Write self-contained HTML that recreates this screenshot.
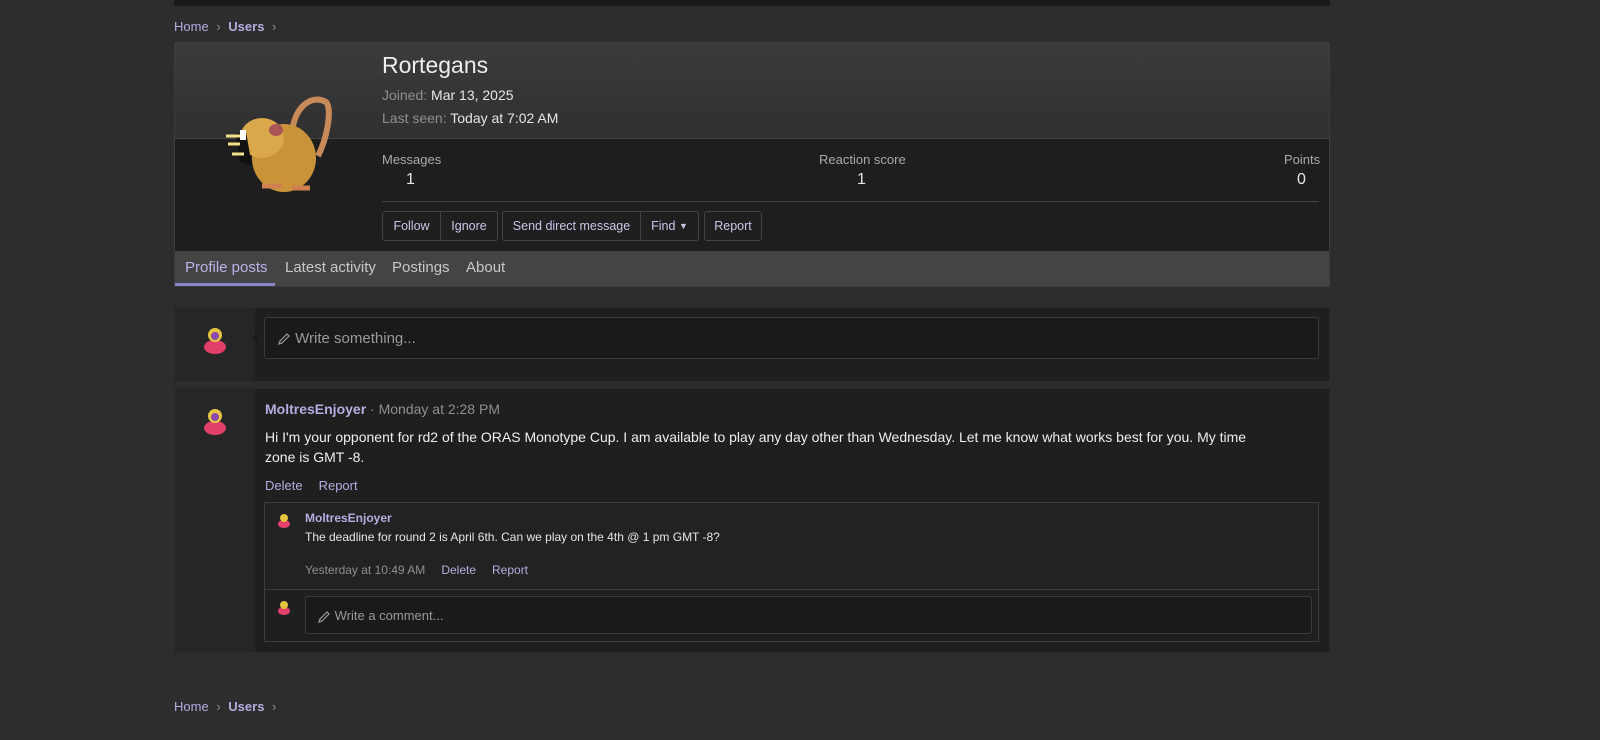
<!DOCTYPE html>
<html><head><meta charset="utf-8"><style>
*{box-sizing:border-box;margin:0;padding:0}
body{width:1600px;height:740px;background:#2d2d2d;font-family:"Liberation Sans",sans-serif;color:#e6e6e6;position:relative;overflow:hidden}
.abs{position:absolute}
.link{color:#b3aee0}
.muted{color:#8f8f8f}
.btn{position:absolute;top:211px;height:30px;border:1px solid #444;background:#1f1f1f;border-radius:3px;font-size:12.5px;color:#c9c7e8;display:flex;align-items:center;white-space:nowrap}
.btn span{padding:0 9px;height:100%;display:flex;align-items:center;white-space:nowrap}
.btn span+span{border-left:1px solid #444}
.pencil{display:inline-block;width:14px;height:14px;vertical-align:middle}
</style></head><body>
<div class="abs" style="left:174px;top:0;width:1156px;height:6px;background:#1b1b1b"></div>
<div class="abs" style="left:174px;top:19px;font-size:13px"><span class="link">Home</span> <span class="muted" style="margin:0 4px">›</span> <b class="link">Users</b> <span class="muted" style="margin-left:4px">›</span></div>

<div class="abs" style="left:174px;top:42px;width:1156px;height:245px;border:1px solid #3c3c3c;background:#1e1e1e">
 <div style="height:96px;background:linear-gradient(#3b3b3b,#303030);border-bottom:1px solid #444"></div>
 <div style="height:112px"></div>
 <div style="height:35px;background:#444;position:relative;font-size:15px;color:#c8c8c8">
  <div class="abs" style="left:10px;top:8px;color:#b9b5e8">Profile posts</div>
  <div class="abs" style="left:0;bottom:0;width:100px;height:3px;background:#8a86c9"></div>
  <div class="abs" style="left:110px;top:8px">Latest activity</div>
  <div class="abs" style="left:217px;top:8px">Postings</div>
  <div class="abs" style="left:291px;top:8px">About</div>
 </div>
</div>
<svg class="abs" style="left:222px;top:96px" width="112" height="104" viewBox="0 0 112 104">
 <path d="M70 38 C72 10 90 -2 104 6 C110 12 106 40 96 60" stroke="#c98a5a" stroke-width="6" fill="none"/>
 <ellipse cx="62" cy="62" rx="32" ry="34" fill="#c9933a"/>
 <ellipse cx="40" cy="42" rx="22" ry="20" fill="#d9a84a"/>
 <path d="M14 38 L24 36 L30 70 L18 66 Z" fill="#111"/>
 <rect x="18" y="34" width="6" height="10" fill="#fff"/>
 <path d="M4 40 h14 M6 48 h12 M10 58 h12" stroke="#f3e08a" stroke-width="3"/>
 <ellipse cx="54" cy="34" rx="7" ry="6" fill="#a55"/>
 <path d="M40 90 h20 M70 92 h18" stroke="#d08050" stroke-width="5"/>
</svg>
<div class="abs" style="left:382px;top:52px;font-size:23px;color:#eee">Rortegans</div>
<div class="abs" style="left:382px;top:87px;font-size:14px"><span class="muted">Joined:</span> Mar 13, 2025</div>
<div class="abs" style="left:382px;top:110px;font-size:14px"><span class="muted">Last seen:</span> Today at 7:02 AM</div>
<div class="abs muted" style="left:382px;top:152px;font-size:13px;color:#aaa">Messages</div>
<div class="abs" style="left:406px;top:171px;font-size:16px">1</div>
<div class="abs" style="left:819px;top:152px;font-size:13px;color:#aaa">Reaction score</div>
<div class="abs" style="left:857px;top:171px;font-size:16px">1</div>
<div class="abs" style="left:1284px;top:152px;font-size:13px;color:#aaa">Points</div>
<div class="abs" style="left:1297px;top:171px;font-size:16px">0</div>
<div class="abs" style="left:382px;top:201px;width:937px;height:1px;background:#444"></div>
<div class="btn" style="left:382px;width:116px"><span style="width:57px;justify-content:center;padding:0">Follow</span><span style="flex:1;justify-content:center;padding:0">Ignore</span></div>
<div class="btn" style="left:502px;width:197px"><span style="width:137px;justify-content:center;padding:0">Send direct message</span><span style="flex:1;justify-content:center;padding:0">Find&nbsp;<small style="font-size:9px">▼</small></span></div>
<div class="btn" style="left:704px;width:58px"><span style="width:100%;justify-content:center;padding:0">Report</span></div>

<div class="abs" style="left:174px;top:307px;width:1156px;height:75px;background:#1f1f1f;border:1px solid #2a2a2a">
 <div style="position:absolute;left:0;top:0;width:80px;height:100%;background:#262626"></div>
</div>
<svg class="abs" style="left:200px;top:325px" width="30" height="30"><ellipse cx="15" cy="22" rx="11" ry="7" fill="#e0406a"/><circle cx="15" cy="10" r="7" fill="#e5c540"/><circle cx="15" cy="11" r="4" fill="#8a4ab0"/></svg>
<div class="abs" style="left:246px;top:332px;border:6px solid transparent;border-right-color:#1a1a1a"></div>
<div class="abs" style="left:264px;top:317px;width:1055px;height:42px;background:#1a1a1a;border:1px solid #3a3a3a;border-radius:3px;font-size:15px;color:#999;padding:12px 12px">
<svg class="pencil" viewBox="0 0 14 14"><path d="M2 12 L3 9 L10 2 L12 4 L5 11 Z" stroke="#999" fill="none" stroke-width="1.2"/></svg> Write something...</div>

<div class="abs" style="left:174px;top:388px;width:1156px;height:265px;background:#1f1f1f;border:1px solid #2a2a2a">
 <div style="position:absolute;left:0;top:0;width:80px;height:100%;background:#262626"></div>
</div>
<svg class="abs" style="left:200px;top:406px" width="30" height="30"><ellipse cx="15" cy="22" rx="11" ry="7" fill="#e0406a"/><circle cx="15" cy="10" r="7" fill="#e5c540"/><circle cx="15" cy="11" r="4" fill="#8a4ab0"/></svg>
<div class="abs" style="left:246px;top:414px;border:6px solid transparent;border-right-color:#1f1f1f"></div>
<div class="abs" style="left:265px;top:401px;font-size:14px"><b class="link">MoltresEnjoyer</b> <span class="muted">· Monday at 2:28 PM</span></div>
<div class="abs" style="left:265px;top:427px;width:1045px;font-size:14px;line-height:20px;color:#eee">Hi I'm your opponent for rd2 of the ORAS Monotype Cup. I am available to play any day other than Wednesday. Let me know what works best for you. My time<br>zone is GMT -8.</div>
<div class="abs link" style="left:265px;top:478px;font-size:13px">Delete<span style="margin-left:16px">Report</span></div>
<div class="abs" style="left:264px;top:502px;width:1055px;height:140px;border:1px solid #3e3e3e;background:#222">
 <div style="position:absolute;left:0;top:86px;width:100%;height:1px;background:#3e3e3e"></div>
 <div style="position:absolute;left:0;top:87px;width:100%;height:51px;background:#1f1f1f"></div>
</div>
<svg class="abs" style="left:276px;top:512px" width="16" height="16"><ellipse cx="8" cy="12" rx="6" ry="4" fill="#e0406a"/><circle cx="8" cy="6" r="4" fill="#e5c540"/></svg>
<div class="abs link" style="left:305px;top:511px;font-size:12px;font-weight:bold">MoltresEnjoyer</div>
<div class="abs" style="left:305px;top:530px;font-size:12px">The deadline for round 2 is April 6th. Can we play on the 4th @ 1 pm GMT -8?</div>
<div class="abs" style="left:305px;top:563px;font-size:12px"><span class="muted">Yesterday at 10:49 AM</span><span class="link" style="margin-left:16px">Delete</span><span class="link" style="margin-left:16px">Report</span></div>
<svg class="abs" style="left:276px;top:599px" width="16" height="16"><ellipse cx="8" cy="12" rx="6" ry="4" fill="#e0406a"/><circle cx="8" cy="6" r="4" fill="#e5c540"/></svg>
<div class="abs" style="left:305px;top:596px;width:1007px;height:38px;background:#1a1a1a;border:1px solid #3a3a3a;border-radius:3px;font-size:13px;color:#999;padding:11px 11px">
<svg class="pencil" viewBox="0 0 14 14"><path d="M2 12 L3 9 L10 2 L12 4 L5 11 Z" stroke="#999" fill="none" stroke-width="1.2"/></svg> Write a comment...</div>

<div class="abs" style="left:174px;top:699px;font-size:13px"><span class="link">Home</span> <span class="muted" style="margin:0 4px">›</span> <b class="link">Users</b> <span class="muted" style="margin-left:4px">›</span></div>
</body></html>
